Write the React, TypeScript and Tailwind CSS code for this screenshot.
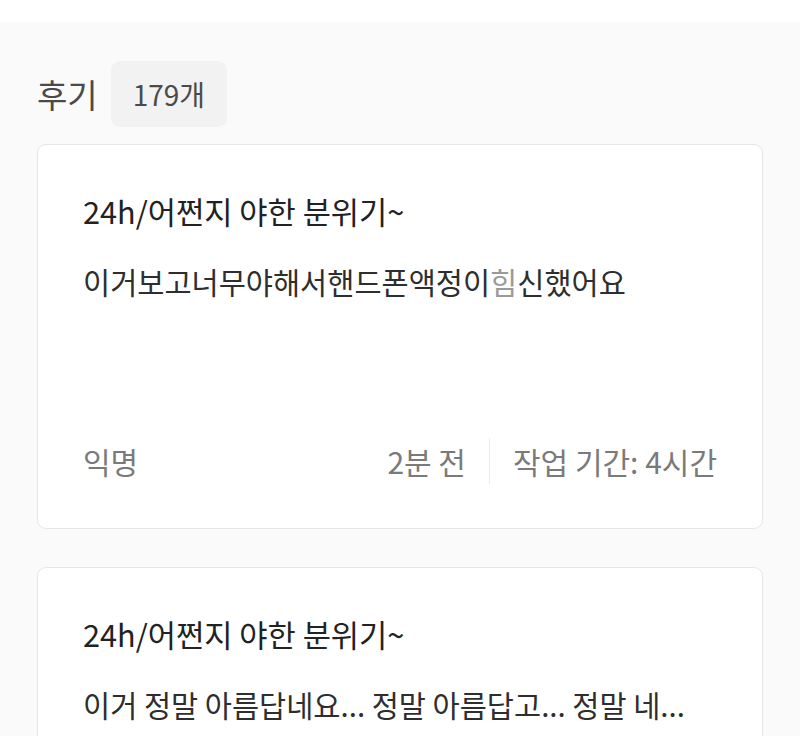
import React from 'react';

type Review = {
    title: string;
    body: React.ReactNode;
    author: string;
    time: string;
    duration: string;
};

const reviews: Review[] = [
    {
        title: '24h/어쩐지 야한 분위기~',
        body: (
            <>
                이거보고너무야해서핸드폰액정이<span className="text-[#9a9a9a]">힘</span>신했어요
            </>
        ),
        author: '익명',
        time: '2분 전',
        duration: '작업 기간: 4시간',
    },
    {
        title: '24h/어쩐지 야한 분위기~',
        body: '이거 정말 아름답네요... 정말 아름답고... 정말 네...',
        author: '익명',
        time: '5분 전',
        duration: '작업 기간: 2시간',
    },
];

const ReviewCard: React.FC<{ review: Review }> = ({ review }) => (
    <div className="bg-white border border-[#e6e6e6] rounded-[9px] px-[45px] pt-[46px] pb-[47px]">
        <h3 className="text-[30.7px] leading-[40px] text-[#222222] whitespace-nowrap">{review.title}</h3>
        <p className="mt-[30px] min-h-[150px] text-[29.5px] leading-[40px] text-[#2e2e2e] whitespace-nowrap">
            {review.body}
        </p>
        <div className="mt-[30px] h-[40px] flex items-center justify-between text-[30px] leading-[40px] text-[#7a7a7a]">
            <span>{review.author}</span>
            <div className="flex items-center">
                <span>{review.time}</span>
                <span className="mx-[23px] h-[46px] w-px bg-[#ececec]" />
                <span>{review.duration}</span>
            </div>
        </div>
    </div>
);

export default function App() {
    return (
        <div
            className="min-h-screen bg-white"
            style={{ fontFamily: '"Noto Sans CJK KR", "Noto Sans", sans-serif' }}
        >
            <div className="h-[22px] bg-white" />
            <div className="bg-[#fafafa] px-[37px] pt-[39px] pb-[40px]">
                {/* Header */}
                <div className="flex items-center gap-[13px]">
                    <h2 className="text-[33px] leading-none text-[#4a4a4a]">후기</h2>
                    <span className="h-[66px] px-[22px] flex items-center rounded-[9px] bg-[#f2f2f2] text-[28px] text-[#4a4a4a]">
                        179개
                    </span>
                </div>

                {/* Review list */}
                <div className="mt-[17px] flex flex-col gap-[38px]">
                    {reviews.map((r, i) => (
                        <ReviewCard key={i} review={r} />
                    ))}
                </div>
            </div>
        </div>
    );
}
